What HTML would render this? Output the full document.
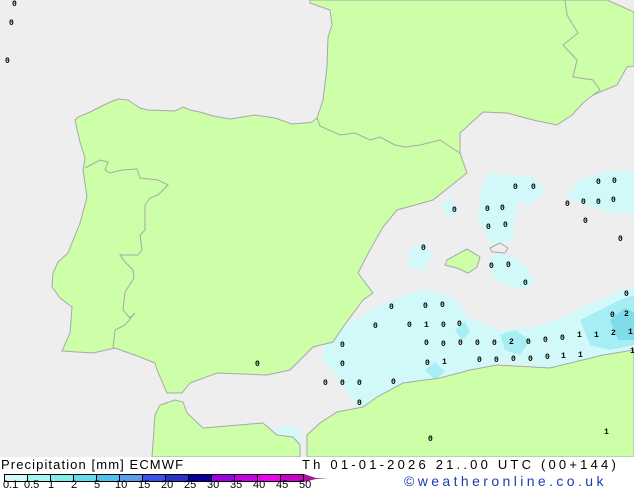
<!DOCTYPE html>
<html><head><style>
body{margin:0;width:634px;height:490px;overflow:hidden;background:#fff;font-family:"Liberation Sans",sans-serif}
svg{position:absolute;left:0;top:0}
.t{font-family:"Liberation Mono",monospace;font-size:8px;fill:#000;font-weight:bold}
</style></head><body>
<svg width="634" height="457" viewBox="0 0 634 457">
<rect width="634" height="457" fill="#eeeeee"/>
<g fill="#d2f9f9">
<polygon points="487,173 500,174 533,177 545,192 530,205 520,200 515,215 512,240 495,245 485,235 478,215 480,195"/>
<polygon points="566,195 580,180 600,173 634,170 634,215 612,212 600,210 585,205"/>
<polygon points="440,205 450,198 458,210 448,218"/>
<polygon points="489,258 500,253 520,260 535,280 525,290 505,285 492,275"/>
<polygon points="410,250 425,243 432,255 423,270 408,268"/>
<polygon points="340,330 355,320 380,305 400,297 420,290 440,292 455,300 470,318 500,330 530,328 560,318 600,300 634,285 634,355 600,355 550,368 500,362 470,372 440,378 400,385 378,400 360,408 348,395 335,372 322,360 325,345"/>
<polygon points="410,445 420,430 435,432 445,450 435,455 415,455"/>
<polygon points="590,430 605,420 620,428 622,450 605,457 593,450"/>
<polygon points="610,395 625,385 634,388 634,407 615,408"/>
<polygon points="275,430 285,425 300,430 300,445 285,445"/>
</g>
<g fill="#a6eef4">
<polygon points="500,335 515,330 530,340 520,355 505,350"/>
<polygon points="580,320 600,310 620,300 634,295 634,345 610,350 590,345"/>
<polygon points="425,370 435,362 445,372 435,380"/>
<polygon points="455,330 465,322 470,332 462,340"/>
</g>
<g fill="#80dcea"><polygon points="610,320 625,308 634,312 634,340 618,340"/></g>
<g fill="#ccffa8" stroke="#a8a8a8" stroke-width="1">
<polygon points="310,0 310,3 330,10 332,25 328,37 327,67 323,100 317,118 312,122 305,123 292,124 275,118 255,115 230,119 213,116 200,112 190,110 183,107 175,111 148,110 140,108 128,100 118,99 108,103 88,113 78,117 75,120 80,142 85,158 83,170 87,197 80,223 68,253 58,262 53,273 52,287 60,298 72,307 70,333 62,351 93,353 115,348 140,357 155,363 157,370 167,393 182,393 190,383 217,373 267,375 290,370 303,357 313,347 333,342 343,327 363,300 373,293 358,273 370,250 383,227 397,210 433,200 467,173 460,153 460,133 483,112 507,113 533,120 557,125 572,115 583,103 593,95 617,85 627,67 634,66 634,12 607,0"/>
<polygon points="634,350 603,355 550,368 497,365 470,370 440,378 403,383 377,397 363,407 337,412 320,423 307,435 307,457 634,457"/>
<polygon points="293,437 277,435 263,423 203,428 187,413 183,402 175,400 160,405 155,415 152,457 300,457 300,445"/>
<polygon points="447,260 467,249 480,257 477,267 468,273 457,268 445,265"/>
</g>
<g fill="none" stroke="#a8a8a8" stroke-width="1">
<polygon points="490,248 500,243 508,248 505,253 492,252"/>
<polyline points="85,168 100,160 108,162 105,170 110,173 122,170 137,169 140,178 158,180 168,185 158,195 150,198 145,205 145,230 140,235 142,250 138,255 120,255 125,262 133,270 134,278 125,292 123,310 130,318 135,313 125,325 115,330 113,348"/>
<polyline points="317,118 320,126 340,135 355,133 370,140 380,137 395,145 405,147 420,145 440,140 455,150 460,153"/>
<polyline points="565,0 567,15 578,33 563,45 577,60 573,77 593,80 600,90 593,95"/>
</g>
<g class="t">
<text x="513" y="189">0</text><text x="531" y="189">0</text><text x="452" y="212">0</text><text x="485" y="211">0</text><text x="500" y="210">0</text><text x="486" y="229">0</text><text x="503" y="227">0</text><text x="596" y="184">0</text><text x="612" y="183">0</text><text x="581" y="204">0</text><text x="596" y="204">0</text><text x="611" y="202">0</text><text x="565" y="206">0</text><text x="583" y="223">0</text><text x="618" y="241">0</text><text x="421" y="250">0</text><text x="489" y="268">0</text><text x="506" y="267">0</text><text x="523" y="285">0</text><text x="389" y="309">0</text><text x="423" y="308">0</text><text x="440" y="307">0</text><text x="624" y="296">0</text><text x="373" y="328">0</text><text x="407" y="327">0</text><text x="424" y="327">1</text><text x="441" y="327">0</text><text x="457" y="326">0</text><text x="624" y="316">2</text><text x="610" y="317">0</text><text x="340" y="347">0</text><text x="424" y="345">0</text><text x="441" y="346">0</text><text x="458" y="345">0</text><text x="475" y="345">0</text><text x="492" y="345">0</text><text x="509" y="344">2</text><text x="526" y="344">0</text><text x="543" y="342">0</text><text x="560" y="340">0</text><text x="577" y="337">1</text><text x="594" y="337">1</text><text x="611" y="335">2</text><text x="628" y="334">1</text><text x="340" y="366">0</text><text x="425" y="365">0</text><text x="442" y="364">1</text><text x="477" y="362">0</text><text x="494" y="362">0</text><text x="511" y="361">0</text><text x="528" y="361">0</text><text x="545" y="359">0</text><text x="561" y="358">1</text><text x="578" y="357">1</text><text x="630" y="353">1</text><text x="323" y="385">0</text><text x="340" y="385">0</text><text x="357" y="385">0</text><text x="391" y="384">0</text><text x="357" y="405">0</text><text x="255" y="366">0</text><text x="428" y="441">0</text><text x="604" y="434">1</text><text x="12" y="6">0</text><text x="9" y="25">0</text><text x="5" y="63">0</text>
</g>
</svg>
<div style="position:absolute;left:0;top:457px;width:634px;height:33px;background:#fff">
<div style="position:absolute;left:1px;top:0;font-size:13px;letter-spacing:1.1px;white-space:nowrap">Precipitation [mm] ECMWF</div>
<div style="position:absolute;left:302px;top:0;font-size:13px;letter-spacing:3.2px;white-space:nowrap">Th 01-01-2026 21..00 UTC (00+144)</div>
<div style="position:absolute;left:404px;top:16px;font-size:14px;letter-spacing:3.4px;color:#1a3cb4;white-space:nowrap">©weatheronline.co.uk</div>
<svg width="340" height="33" style="top:0">
<g stroke="#000" stroke-width="1">
<rect x="4.5" y="17.5" width="23" height="7" fill="#d2fafa"/><rect x="27.5" y="17.5" width="23" height="7" fill="#a4f6f6"/><rect x="50.5" y="17.5" width="23" height="7" fill="#82ecec"/><rect x="73.5" y="17.5" width="23" height="7" fill="#64dcee"/><rect x="96.5" y="17.5" width="23" height="7" fill="#50c0ee"/><rect x="119.5" y="17.5" width="23" height="7" fill="#5a9cee"/><rect x="142.5" y="17.5" width="23" height="7" fill="#3c50f0"/><rect x="165.5" y="17.5" width="23" height="7" fill="#2832c8"/><rect x="188.5" y="17.5" width="23" height="7" fill="#0a00a0"/><rect x="211.5" y="17.5" width="23" height="7" fill="#a000e6"/><rect x="234.5" y="17.5" width="23" height="7" fill="#c800e6"/><rect x="257.5" y="17.5" width="23" height="7" fill="#f000f0"/><rect x="280.5" y="17.5" width="23" height="7" fill="#c800c8"/>
</g>
<polygon points="304,17 316,21 328,21 316,22 304,25" fill="#a01c96"/>
</svg>
<div style="position:absolute;left:0;top:22px;font-size:11px;width:340px;height:12px">
<span style="position:absolute;left:3px">0.1</span><span style="position:absolute;left:24px">0.5</span><span style="position:absolute;left:48px">1</span><span style="position:absolute;left:71px">2</span><span style="position:absolute;left:94px">5</span><span style="position:absolute;left:115px">10</span><span style="position:absolute;left:138px">15</span><span style="position:absolute;left:161px">20</span><span style="position:absolute;left:184px">25</span><span style="position:absolute;left:207px">30</span><span style="position:absolute;left:230px">35</span><span style="position:absolute;left:253px">40</span><span style="position:absolute;left:276px">45</span><span style="position:absolute;left:299px">50</span>
</div>
</div>
</body></html>
